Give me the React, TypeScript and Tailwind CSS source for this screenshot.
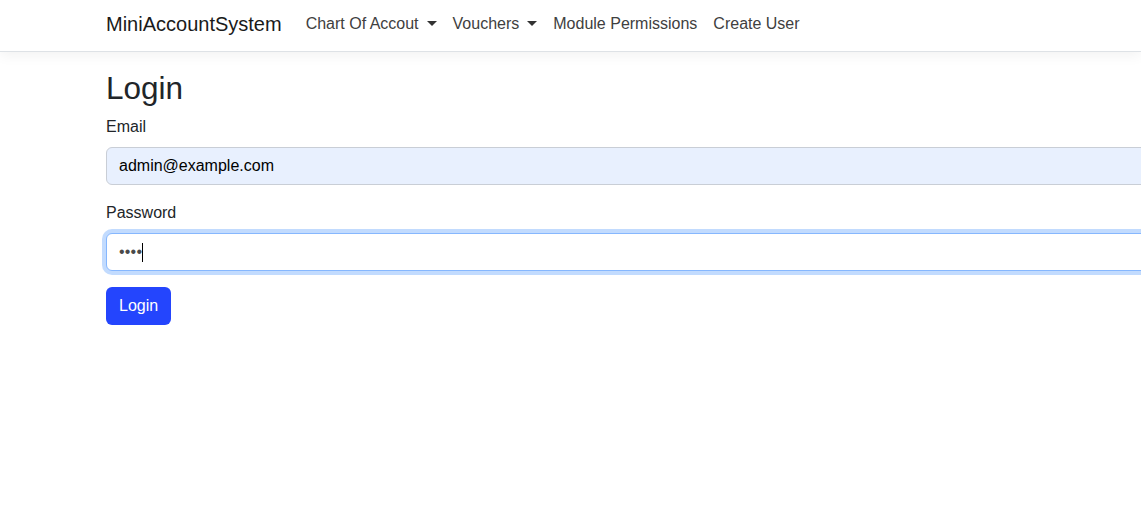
import { useState } from "react";

/**
 * Login page for MiniAccountSystem. Bootstrap-ish look: white navbar with a
 * soft shadow, a wide container and a simple email/password form.
 */

const navLinks = [
  { label: "Chart Of Accout", dropdown: true },
  { label: "Vouchers", dropdown: true },
  { label: "Module Permissions", dropdown: false },
  { label: "Create User", dropdown: false },
];

function Caret() {
  return (
    <span className="ml-[8px] inline-block h-0 w-0 translate-y-[-1px] border-x-[5px] border-t-[5px] border-x-transparent border-t-[#333] align-middle" />
  );
}

function Navbar() {
  return (
    <nav className="relative z-10 h-[52px] border-b border-[#dee2e6] bg-white shadow-[0_4px_12px_rgba(0,0,0,0.05)]">
      <div className="flex h-full items-center pb-[3px] pl-[106px]">
        <a className="mr-4 text-[20px] leading-[30px] text-[#1a1a1a]">MiniAccountSystem</a>
        <ul className="flex items-center">
          {navLinks.map((l) => (
            <li key={l.label}>
              <a className="inline-flex items-center px-2 text-[16px] leading-6 text-[#404040]">
                {l.label}
                {l.dropdown && <Caret />}
              </a>
            </li>
          ))}
        </ul>
      </div>
    </nav>
  );
}

export default function App() {
  const [email] = useState("admin@example.com");

  return (
    <div
      className="min-h-[522px] w-full overflow-hidden bg-white text-[#212529]"
      style={{ fontFamily: '"Liberation Sans", Arial, sans-serif' }}
    >
      <Navbar />

      <main className="mt-[17px] pl-[106px]">
        <div className="w-[1296px]">
          <h2 className="mb-2 text-[31.5px] leading-[38px] font-normal">Login</h2>

          <div className="mb-4">
            <label className="mb-2 block text-[16px] leading-6">Email</label>
            <div className="h-[38px] rounded-[6px] border border-[#c9ced6] bg-[#e8f0fe] px-3 py-[6px] text-[16px] leading-6 text-black">
              {email}
            </div>
          </div>

          <div className="mb-4">
            <label className="mb-2 block text-[16px] leading-6">Password</label>
            <div className="flex h-[38px] items-center rounded-[6px] border border-[#86b7fe] bg-white px-3 shadow-[0_0_0_4px_rgba(13,110,253,0.25)]">
              <span className="text-[16px] leading-none tracking-[0.2px] text-[#4a4a4a]">••••</span>
              <span className="h-[19px] w-px bg-black" />
            </div>
          </div>

          <button
            type="button"
            className="h-[38px] rounded-[6px] bg-[#2445fd] px-[13px] text-[16px] leading-6 text-white"
          >
            Login
          </button>
        </div>
      </main>
    </div>
  );
}
